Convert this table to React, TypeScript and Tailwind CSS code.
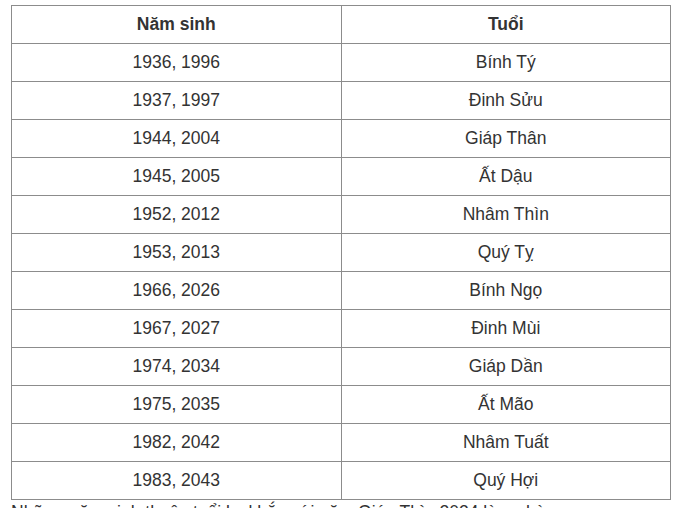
const rows: [string, string][] = [
  ["1936, 1996", "Bính Tý"],
  ["1937, 1997", "Đinh Sửu"],
  ["1944, 2004", "Giáp Thân"],
  ["1945, 2005", "Ất Dậu"],
  ["1952, 2012", "Nhâm Thìn"],
  ["1953, 2013", "Quý Tỵ"],
  ["1966, 2026", "Bính Ngọ"],
  ["1967, 2027", "Đinh Mùi"],
  ["1974, 2034", "Giáp Dần"],
  ["1975, 2035", "Ất Mão"],
  ["1982, 2042", "Nhâm Tuất"],
  ["1983, 2043", "Quý Hợi"],
];

const App = () => {
  return (
    <div
      className="w-[681px] h-[508px] overflow-hidden bg-white text-[#333] text-[17.5px]"
      style={{ fontFamily: '"Liberation Sans", Arial, sans-serif' }}
    >
      <div className="pt-[5px] pl-[11px]">
        <table className="w-[660px] border-collapse table-fixed">
          <thead>
            <tr className="h-[38px]">
              <th className="border border-[#8c8c8c] font-bold text-center">Năm sinh</th>
              <th className="border border-[#8c8c8c] font-bold text-center">Tuổi</th>
            </tr>
          </thead>
          <tbody>
            {rows.map(([year, age]) => (
              <tr key={year} className="h-[38px]">
                <td className="border border-[#8c8c8c] text-center">{year}</td>
                <td className="border border-[#8c8c8c] text-center">{age}</td>
              </tr>
            ))}
          </tbody>
        </table>
        <p className="mt-[1px] whitespace-nowrap leading-[22px]">
          Những năm sinh thuộc tuổi kỵ khắc với năm Giáp Thìn 2024 làm nhà
        </p>
      </div>
    </div>
  );
};

export default App;
